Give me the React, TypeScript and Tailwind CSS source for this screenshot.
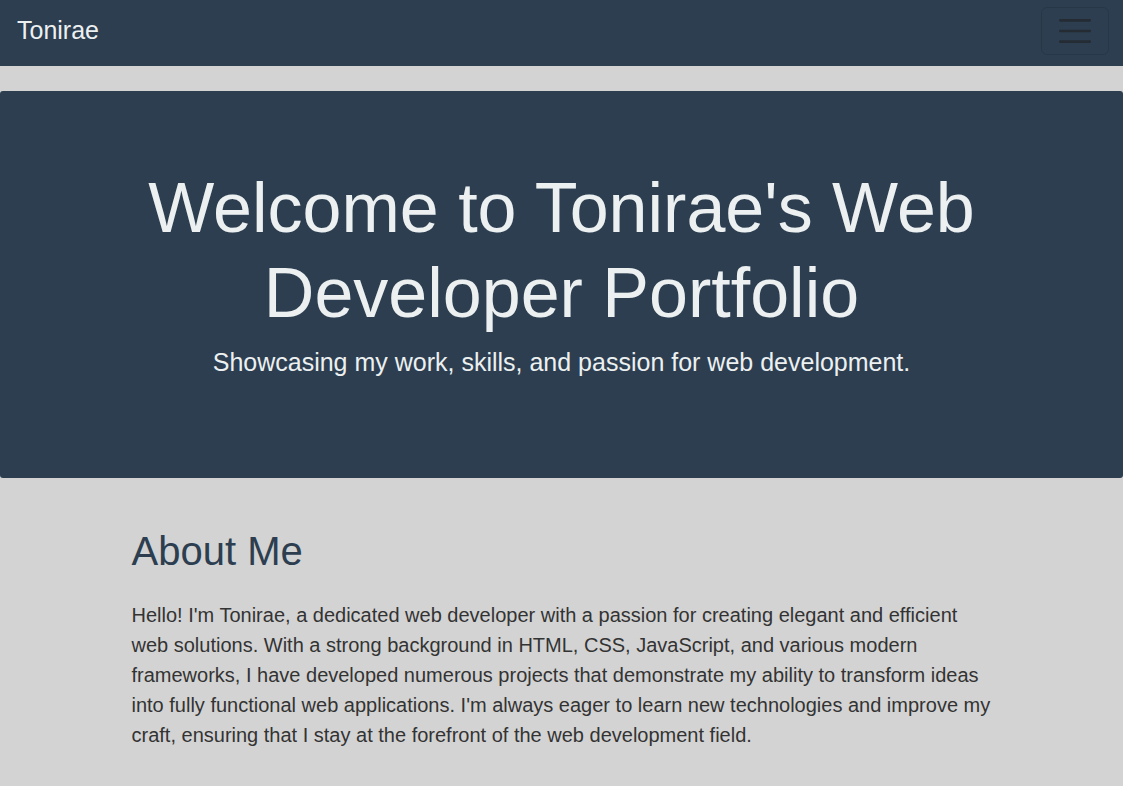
export default function App() {
  return (
    <div className="min-h-screen bg-[#d3d3d3] font-['Liberation_Sans',Arial,sans-serif]">
      {/* Navbar */}
      <nav className="h-[66px] bg-[#2c3e50] flex items-center justify-between pl-[17px] pr-[14px]">
        <a className="text-[25px] leading-none text-[#ecf0f1] pb-[5px]">Tonirae</a>
        <button className="w-[68px] h-[48px] rounded-[6px] border border-[rgba(0,0,0,0.1)] flex items-center justify-center mb-[4px]">
          <svg width="40" height="40" viewBox="0 0 30 30">
            <path
              d="M4 7h22M4 15h22M4 23h22"
              stroke="rgba(33,37,41,0.75)"
              strokeWidth="2"
              strokeLinecap="round"
            />
          </svg>
        </button>
      </nav>

      <main className="pt-[25px]">
        {/* Hero */}
        <section className="bg-[#2c3e50] rounded-[3px] text-center text-[#ecf0f1] pt-[75px] pb-[98px]">
          <h1 className="text-[70px] leading-[85px] max-w-[900px] mx-auto mb-2">
            Welcome to Tonirae's Web Developer Portfolio
          </h1>
          <p className="text-[25px] leading-[36px]">
            Showcasing my work, skills, and passion for web development.
          </p>
        </section>

        {/* About */}
        <section className="w-[860px] mx-auto pt-[49px] pb-10">
          <h2 className="text-[40px] leading-[48px] text-[#2c3e50] mb-[25px]">About Me</h2>
          <p className="text-[20px] leading-[30px] text-[#333333]">
            Hello! I'm Tonirae, a dedicated web developer with a passion for creating elegant and efficient
            web solutions. With a strong background in HTML, CSS, JavaScript, and various modern
            frameworks, I have developed numerous projects that demonstrate my ability to transform ideas
            into fully functional web applications. I'm always eager to learn new technologies and improve my
            craft, ensuring that I stay at the forefront of the web development field.
          </p>
        </section>
      </main>
    </div>
  );
}
